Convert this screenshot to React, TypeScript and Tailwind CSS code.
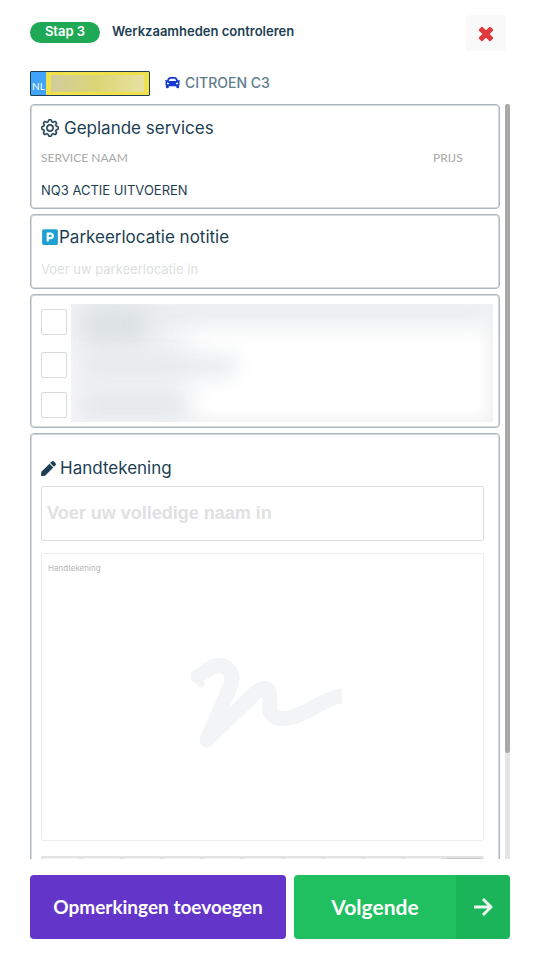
import type { ReactNode } from "react";
import { BsGear } from "react-icons/bs";
import { FaCar, FaParking, FaPen } from "react-icons/fa";

const services = ["NQ3 ACTIE UITVOEREN"];

const agreements = [
  { id: "agreement-1", row: "h-[43px]" },
  { id: "agreement-2", row: "h-10" },
  { id: "agreement-3", row: "h-[26px]" },
];

const keypad = ["0", "1", "2", "3", "4", "5", "6", "7", "8", "9"];

interface CardProps {
  readonly className?: string;
  readonly children: ReactNode;
}

function Card({ className = "", children }: CardProps) {
  return (
    <section
      className={`shrink-0 rounded border border-[#adb6bc] px-2.5 shadow-[inset_0_0_0_1px_#d6dbde] ${className}`}
    >
      {children}
    </section>
  );
}

function LicensePlate() {
  return (
    <div className="flex h-[25px] w-[120px] rounded-[1px] border border-[#1d3f53] bg-[#f0e14c]">
      <span className="flex w-[15px] items-end justify-center bg-[#40a4fd] font-['Lato',sans-serif] text-[10px] leading-[18px] text-white">
        NL
      </span>
      <span className="my-[3px] mr-[5px] ml-[5px] flex-1 bg-linear-to-r from-[#d0cd9c] via-[#dcd574] to-[#e6e1a2]" />
    </div>
  );
}

function Header() {
  return (
    <header className="flex h-9 shrink-0 items-start justify-between pr-1">
      <div className="flex h-[34px] items-center gap-3 text-[13px] font-semibold">
        <span className="flex h-[21px] w-[70px] items-center justify-center rounded-full bg-[#1fa855] text-white">
          Stap 3
        </span>
        <h1>Werkzaamheden controleren</h1>
      </div>
      <button
        type="button"
        aria-label="Sluiten"
        className="flex h-9 w-10 items-center justify-center rounded-xs bg-[#f9f9f9] pt-0.5 text-[#e03a3c]"
      >
        <svg viewBox="0 0 14 14" className="size-4" fill="currentColor" stroke="currentColor" aria-hidden="true">
          <path
            d="M3.5 1.5L7 5L10.5 1.5L12.5 3.5L9 7L12.5 10.5L10.5 12.5L7 9L3.5 12.5L1.5 10.5L5 7L1.5 3.5Z"
            strokeWidth="1.6"
            strokeLinejoin="round"
          />
        </svg>
      </button>
    </header>
  );
}

function PlannedServices() {
  return (
    <Card className="pt-[11px] pb-0.5">
      <h2 className="flex items-center gap-[5px] text-[17px] leading-6">
        <BsGear size={18} stroke="currentColor" strokeWidth={0.5} />
        Geplande services
      </h2>
      <table className="w-full text-left text-[13px]">
        <thead className="font-['Lato',sans-serif] text-xs text-[#a9a9a9]">
          <tr>
            <th className="h-9 font-normal">SERVICE NAAM</th>
            <th className="w-14 font-normal">PRIJS</th>
          </tr>
        </thead>
        <tbody>
          {services.map((service) => (
            <tr key={service}>
              <td className="h-[30px]">{service}</td>
              <td />
            </tr>
          ))}
        </tbody>
      </table>
    </Card>
  );
}

function ParkingNote() {
  return (
    <Card className="pt-2 pb-[5px]">
      <h2 className="text-[17px] leading-7">
        <label htmlFor="parking" className="flex items-center">
          <FaParking size={18} className="text-[#1fa0d3]" />
          Parkeerlocatie notitie
        </label>
      </h2>
      <input
        id="parking"
        placeholder="Voer uw parkeerlocatie in"
        className="mt-1 block h-7 w-full text-[13px] outline-none placeholder:text-[#dddfe0]"
      />
    </Card>
  );
}

function Agreements() {
  return (
    <Card className="flex gap-1 pt-[9px] pr-1.5 pb-[5px]">
      <div className="pt-[5px]">
        {agreements.map(({ id, row }) => (
          <div key={id} className={row}>
            <input
              id={id}
              type="checkbox"
              aria-label="Akkoord"
              className="block size-[26px] appearance-none rounded-xs border border-[#d8dadb] checked:bg-[#1fa855]"
            />
          </div>
        ))}
      </div>
      <div className="relative h-[118px] flex-1 overflow-hidden bg-white shadow-[inset_-5px_-3px_14px_#f0f0f1]">
        <div className="absolute top-2 -left-3 h-32 w-32 bg-[#f1f2f4] blur-[14px]" />
        <div className="absolute -top-1 left-0 h-6 w-full bg-[#e6eaec] blur-[11px]" />
        <div className="absolute top-1 left-3 h-9 w-16 bg-[#dbe1e4] blur-[11px]" />
        <div className="absolute top-[52px] left-3 h-5 w-38 bg-[#e5e9eb] blur-[10px]" />
        <div className="absolute top-[94px] left-3 h-4 w-26 bg-[#dfe4e7] blur-[10px]" />
      </div>
    </Card>
  );
}

function Signature() {
  return (
    <Card className="pt-5">
      <h2 className="text-[17px] leading-7">
        <label htmlFor="full-name" className="flex items-center gap-1">
          <FaPen size={15} />
          Handtekening
        </label>
      </h2>
      <div className="mt-1 mr-[5px]">
        <input
          id="full-name"
          placeholder="Voer uw volledige naam in"
          className="block h-[55px] w-full rounded-xs border border-[#dadcdd] px-[5px] font-['Liberation_Sans',sans-serif] text-lg font-bold outline-none placeholder:text-[#dfe1e2]"
        />
        <div className="mt-3 flex h-[288px] flex-col rounded-xs border border-[#ededee] px-1.5 pt-2">
          <span className="text-[8px] leading-3 text-[#b8b8b8]">Handtekening</span>
          <div className="flex flex-1 justify-center pt-[83px] pl-2">
            <svg viewBox="0 0 151 92" className="h-[92px] w-[151px]" aria-hidden="true">
              <path
                d="M7 19L15 14C24 7 32 7 37 12C42 17 42 23 39 30L16 83L62 38C72 29 79 29 79 40C79 48 78 50 79 54C82 62 90 63 102 60C121 54 135 40 155 38"
                fill="none"
                stroke="#f3f4f6"
                strokeWidth="15"
                strokeLinecap="round"
                strokeLinejoin="round"
              />
              <path
                d="M4 17L10 27"
                stroke="#f3f4f6"
                strokeWidth="7"
                strokeLinecap="round"
              />
            </svg>
          </div>
        </div>
        <div className="mt-[15px] flex gap-1 rounded-xs bg-[#e3e3e3] p-0.5">
          {keypad.map((key) => (
            <button key={key} type="button" aria-label={key} className="h-6 flex-1 rounded-xs bg-[#f4f4f4]" />
          ))}
          <button type="button" aria-label="Wissen" className="h-6 flex-1 rounded-xs bg-[#c4c4c4]" />
        </div>
      </div>
    </Card>
  );
}

function Actions() {
  return (
    <footer className="mt-4 flex h-16 shrink-0 gap-2 font-['Lato',sans-serif] font-bold text-white">
      <button type="button" className="flex-[256] rounded bg-[#6435c9] text-[19px]">
        Opmerkingen toevoegen
      </button>
      <button
        type="button"
        className="flex flex-[216] items-stretch overflow-hidden rounded bg-[#20c060] text-[21px]"
      >
        <span className="flex flex-1 items-center justify-center">Volgende</span>
        <span className="flex w-[54px] items-center justify-center bg-[#1cb459]">
          <svg viewBox="0 0 20 20" className="size-5" fill="none" stroke="#e9f8ef" strokeWidth="3" aria-hidden="true">
            <path d="M1 10H17M10 2L18 10L10 18" strokeLinejoin="round" />
          </svg>
        </span>
      </button>
    </footer>
  );
}

function App() {
  return (
    <main className="flex h-screen flex-col bg-white px-[30px] pt-[15px] pb-[21px] font-['Inter',sans-serif] text-[#1d3f53]">
      <Header />
      <div className="mt-5 flex shrink-0 items-center gap-[15px]">
        <LicensePlate />
        <p className="flex items-center gap-[5px] pb-0.5 text-sm font-medium text-[#5f7d8e]">
          <FaCar size={15} className="text-[#1238d0]" />
          CITROEN C3
        </p>
      </div>
      <div className="mt-2 flex min-h-0 flex-1 gap-[5px]">
        <div className="flex flex-1 flex-col gap-[5px] overflow-y-auto [scrollbar-width:none]">
          <PlannedServices />
          <ParkingNote />
          <Agreements />
          <Signature />
        </div>
        <div className="w-[5px] bg-[#e4e4e4]">
          <div className="h-[86%] rounded-full bg-[#a9a9a9]" />
        </div>
      </div>
      <Actions />
    </main>
  );
}

export default App;
